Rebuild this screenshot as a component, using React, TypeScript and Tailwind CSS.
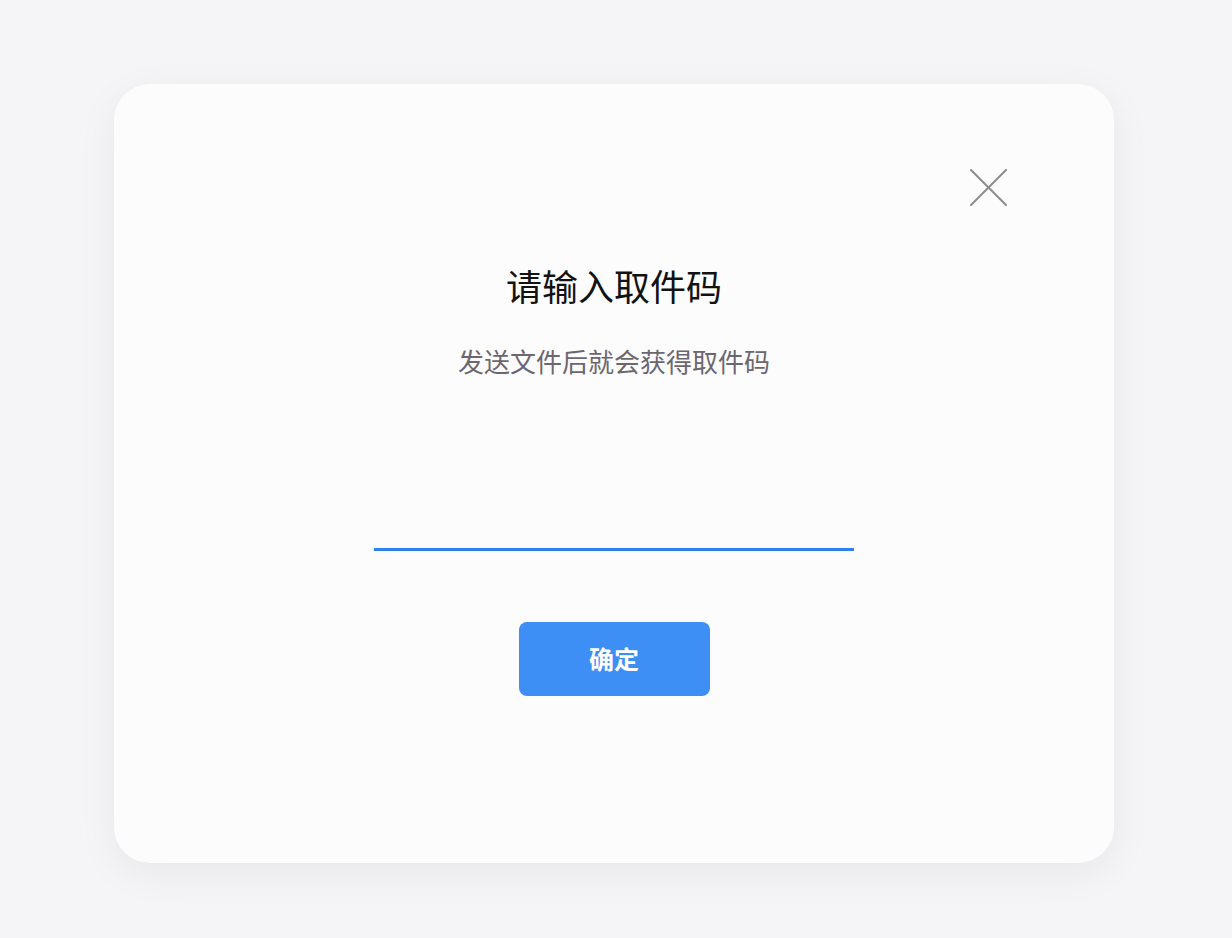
import React, { useState } from "react";

function CloseIcon() {
  return (
    <svg width="37" height="37" viewBox="0 0 37 37" fill="none">
      <path d="M1 1 L36 36 M36 1 L1 36" stroke="#8c8c8c" strokeWidth="2" strokeLinecap="round" />
    </svg>
  );
}

export default function App() {
  const [code, setCode] = useState("");

  return (
    <main
      className="min-h-screen w-full bg-[#f5f5f7] pt-[84px] pb-[75px]"
      style={{ fontFamily: '"Noto Sans CJK SC", "Noto Sans", sans-serif' }}
    >
      <div className="ml-[114px] w-[1000px] rounded-[36px] bg-[#fcfcfd] pt-[85px] pb-[167px] shadow-[0_10px_40px_rgba(0,0,0,0.06)]">
        {/* Close */}
        <div className="flex justify-end pr-[107px]">
          <button className="h-[37px] w-[37px]">
            <CloseIcon />
          </button>
        </div>

        {/* Heading */}
        <div className="flex flex-col items-center">
          <h1 className="mt-[55px] text-[36px] leading-[48px] font-normal text-[#121212]">请输入取件码</h1>
          <p className="mt-[34px] text-[26px] leading-[36px] text-[#6b6670]">发送文件后就会获得取件码</p>

          {/* Input */}
          <input
            value={code}
            onChange={e => setCode(e.target.value)}
            className="mt-[124px] h-[48px] w-[480px] border-b-[3px] border-[#2f82ee] bg-transparent text-center text-[24px] text-[#222] outline-none"
          />

          {/* Confirm */}
          <button className="mt-[71px] h-[74px] w-[191px] rounded-[8px] bg-[#3d8ef5] text-[25px] font-bold text-white">
            确定
          </button>
        </div>
      </div>
    </main>
  );
}
